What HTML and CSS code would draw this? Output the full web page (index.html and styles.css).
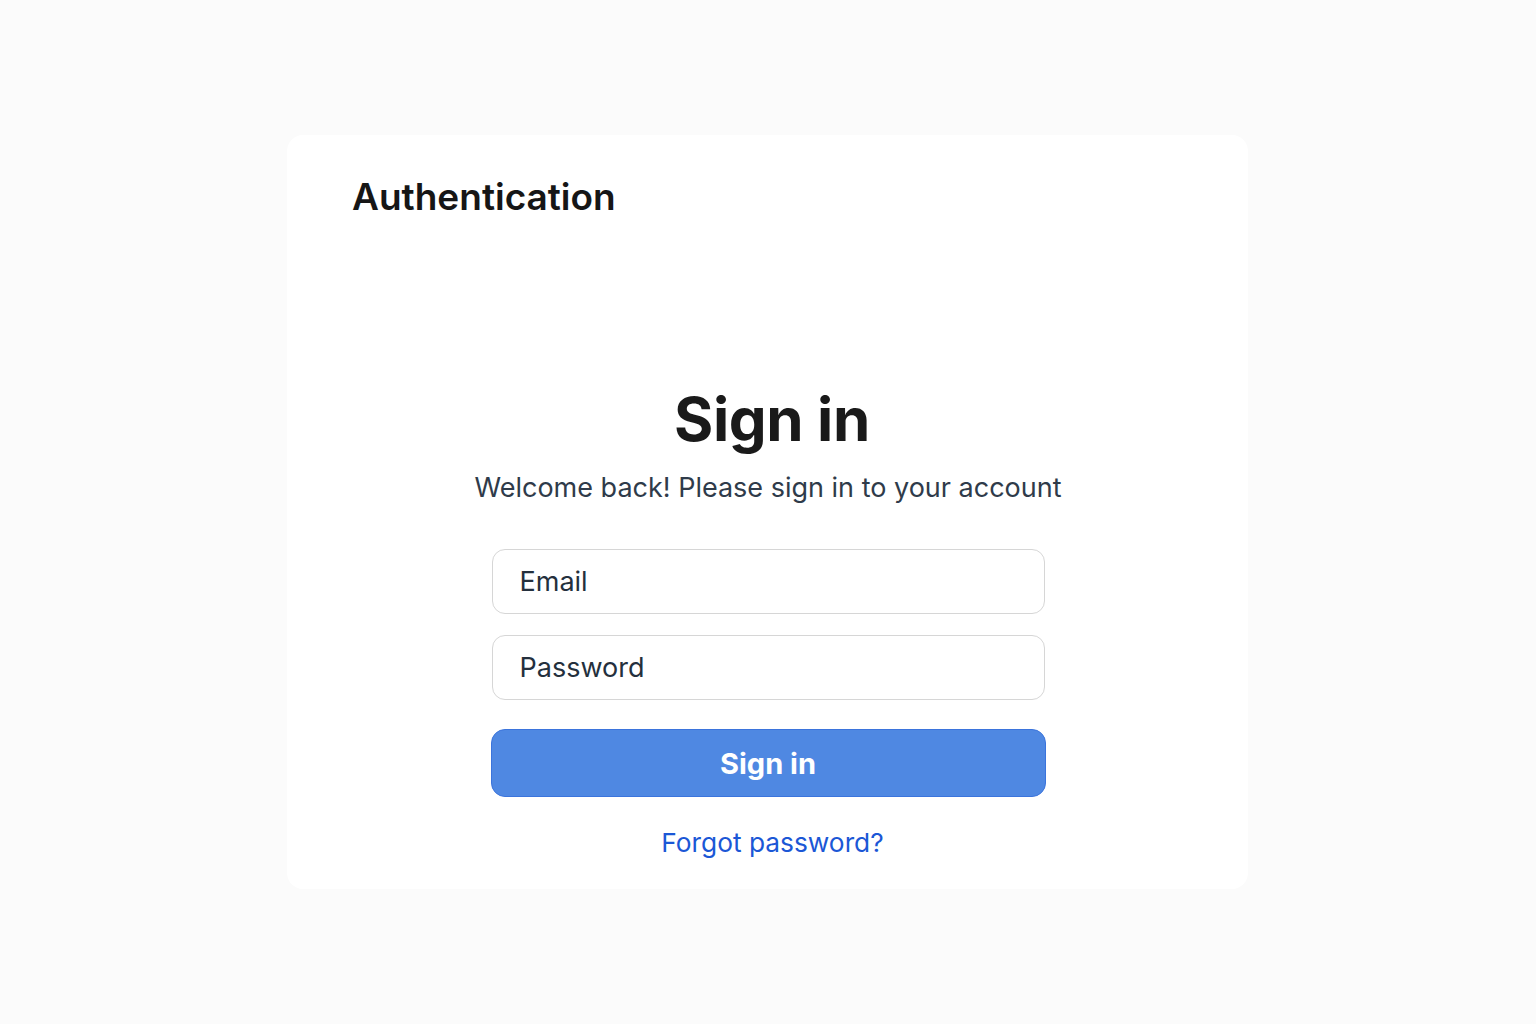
FILE: index.html
```html
<!DOCTYPE html>
<html lang="en">
<head>
<meta charset="utf-8">
<title>Authentication</title>
<link rel="stylesheet" href="styles.css">
</head>
<body>
<main class="page">
  <section class="card">
    <h2 class="card-title">Authentication</h2>
    <form class="form" onsubmit="return false;">
      <h1 class="form-title">Sign in</h1>
      <p class="form-subtitle">Welcome back! Please sign in to your account</p>
      <input class="field" type="email" placeholder="Email">
      <input class="field field-second" type="password" placeholder="Password">
      <button class="btn" type="submit">Sign in</button>
      <a class="link" href="#">Forgot password?</a>
    </form>
  </section>
</main>
</body>
</html>
```

FILE: styles.css
```css
* { box-sizing: border-box; }
html, body {
  margin: 0;
  padding: 0;
  background: #fbfbfb;
  font-family: Inter, "Noto Sans", "Liberation Sans", sans-serif;
}
.page {
  width: 1536px;
  height: 1024px;
  padding-top: 135px;
  padding-left: 287px;
}
.card {
  width: 961px;
  height: 754px;
  background: #ffffff;
  border-radius: 16px;
  padding: 40px 64px 0 65px;
  display: flex;
  flex-direction: column;
}
.card-title {
  margin: 0;
  font-size: 37px;
  line-height: 44px;
  font-weight: 600;
  color: #161616;
}
.form {
  display: flex;
  flex-direction: column;
  align-items: center;
  margin-top: 164px;
}
.form-title {
  margin: 0 0 0 8px;
  font-size: 60px;
  line-height: 72px;
  font-weight: 700;
  color: #1a1a1a;
  letter-spacing: -0.4px;
}
.form-subtitle {
  margin: 17px 0 0;
  font-size: 27px;
  line-height: 32px;
  font-weight: 400;
  color: #2f3b4a;
}
.field {
  margin-top: 45px;
  width: 553px;
  height: 65px;
  border: 1.5px solid #d6d6d6;
  border-radius: 13px;
  background: #fff;
  padding: 0 27px;
  font-family: inherit;
  font-size: 27px;
  color: #1f2d3d;
  outline: none;
}
.field::placeholder { color: #24303d; opacity: 1; }
.field-second { margin-top: 21px; }
.btn {
  margin-top: 29px;
  width: 555px;
  height: 68px;
  border: 1px solid #3b74dc;
  border-radius: 14px;
  background: #4f88e2;
  color: #ffffff;
  font-family: inherit;
  font-size: 29px;
  font-weight: 700;
  cursor: pointer;
}
.link {
  margin-top: 30px;
  margin-left: 9px;
  font-size: 26.3px;
  line-height: 31px;
  color: #1b57d6;
  text-decoration: none;
}
```
